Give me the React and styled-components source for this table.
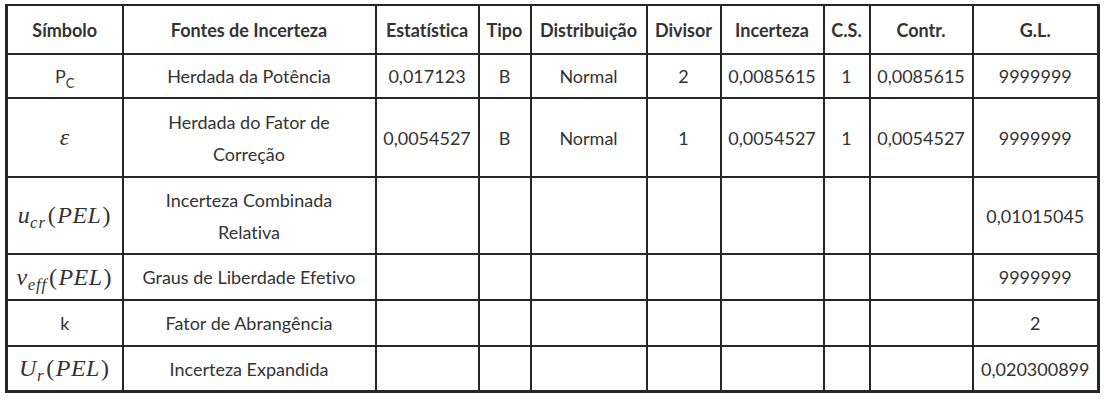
import React from 'react';
import styled, { createGlobalStyle } from 'styled-components';

const GlobalStyle = createGlobalStyle`
  html, body {
    margin: 0;
    padding: 0;
    background: #ffffff;
  }
  body {
    padding: 4px 0 0 5px;
    font-family: Lato, "Open Sans", sans-serif;
    color: #333333;
    font-variant-ligatures: none;
  }
`;

const Table = styled.table`
  border-collapse: collapse;
  table-layout: fixed;
  width: 1094px;
  border-top: 2px solid #262626;
  border-left: 3px solid #262626;
  border-right: 3px solid #262626;
  border-bottom: 3px solid #262626;
  font-size: 18px;
`;

const Col = styled.col`
  width: ${({ w }) => `${w}px`};
`;

const HeadCell = styled.th`
  border: 2px solid #262626;
  height: 47px;
  padding: 0 4px;
  font-weight: 700;
  text-align: center;
  vertical-align: middle;
  white-space: nowrap;
  line-height: 30px;
`;

const Cell = styled.td`
  border: 2px solid #262626;
  height: ${({ h }) => `${h}px`};
  padding: 0 4px;
  text-align: center;
  vertical-align: middle;
  line-height: 32px;
`;

const Sub = styled.sub`
  font-size: 0.72em;
  vertical-align: -0.35em;
  line-height: 0;
`;

const Math = styled.span`
  font-family: "Liberation Serif", "DejaVu Serif", serif;
  font-style: italic;
  font-size: 24px;
  white-space: nowrap;
  letter-spacing: 0.02em;
`;

const MathUp = styled.span`
  font-style: normal;
  padding: 0 1px;
`;

const MathSub = styled.sub`
  font-size: 0.7em;
  vertical-align: -0.3em;
  line-height: 0;
  letter-spacing: 0.05em;
  padding-right: 1px;
`;

const Fn = ({ base, sub }) => (
  <Math>
    {base}
    <MathSub>{sub}</MathSub>
    <MathUp>(</MathUp>PEL<MathUp>)</MathUp>
  </Math>
);

const columns = [116, 253, 103, 52, 116, 74, 103, 46, 103, 126];
const headers = ['Símbolo', 'Fontes de Incerteza', 'Estatística', 'Tipo', 'Distribuição', 'Divisor', 'Incerteza', 'C.S.', 'Contr.', 'G.L.'];

const rows = [
  {
    symbol: <>P<Sub>C</Sub></>,
    source: 'Herdada da Potência',
    h: 42,
    values: ['0,017123', 'B', 'Normal', '2', '0,0085615', '1', '0,0085615', '9999999'],
  },
  {
    symbol: <Math>ε</Math>,
    source: <>Herdada do Fator de<br />Correção</>,
    h: 77,
    values: ['0,0054527', 'B', 'Normal', '1', '0,0054527', '1', '0,0054527', '9999999'],
  },
  {
    symbol: <Fn base="u" sub="cr" />,
    source: <>Incerteza Combinada<br />Relativa</>,
    h: 75,
    values: ['', '', '', '', '', '', '', '0,01015045'],
  },
  {
    symbol: <Fn base="ν" sub="eff" />,
    source: 'Graus de Liberdade Efetivo',
    h: 44,
    values: ['', '', '', '', '', '', '', '9999999'],
  },
  {
    symbol: 'k',
    source: 'Fator de Abrangência',
    h: 44,
    values: ['', '', '', '', '', '', '', '2'],
  },
  {
    symbol: <Fn base="U" sub="r" />,
    source: 'Incerteza Expandida',
    h: 43,
    values: ['', '', '', '', '', '', '', '0,020300899'],
  },
];

export default function App() {
  return (
    <>
      <GlobalStyle />
      <Table>
        <colgroup>
          {columns.map((w, i) => (
            <Col key={i} w={w} />
          ))}
        </colgroup>
        <thead>
          <tr>
            {headers.map((h) => (
              <HeadCell key={h}>{h}</HeadCell>
            ))}
          </tr>
        </thead>
        <tbody>
          {rows.map((row, i) => (
            <tr key={i}>
              <Cell h={row.h}>{row.symbol}</Cell>
              <Cell h={row.h}>{row.source}</Cell>
              {row.values.map((v, j) => (
                <Cell key={j} h={row.h}>{v}</Cell>
              ))}
            </tr>
          ))}
        </tbody>
      </Table>
    </>
  );
}
